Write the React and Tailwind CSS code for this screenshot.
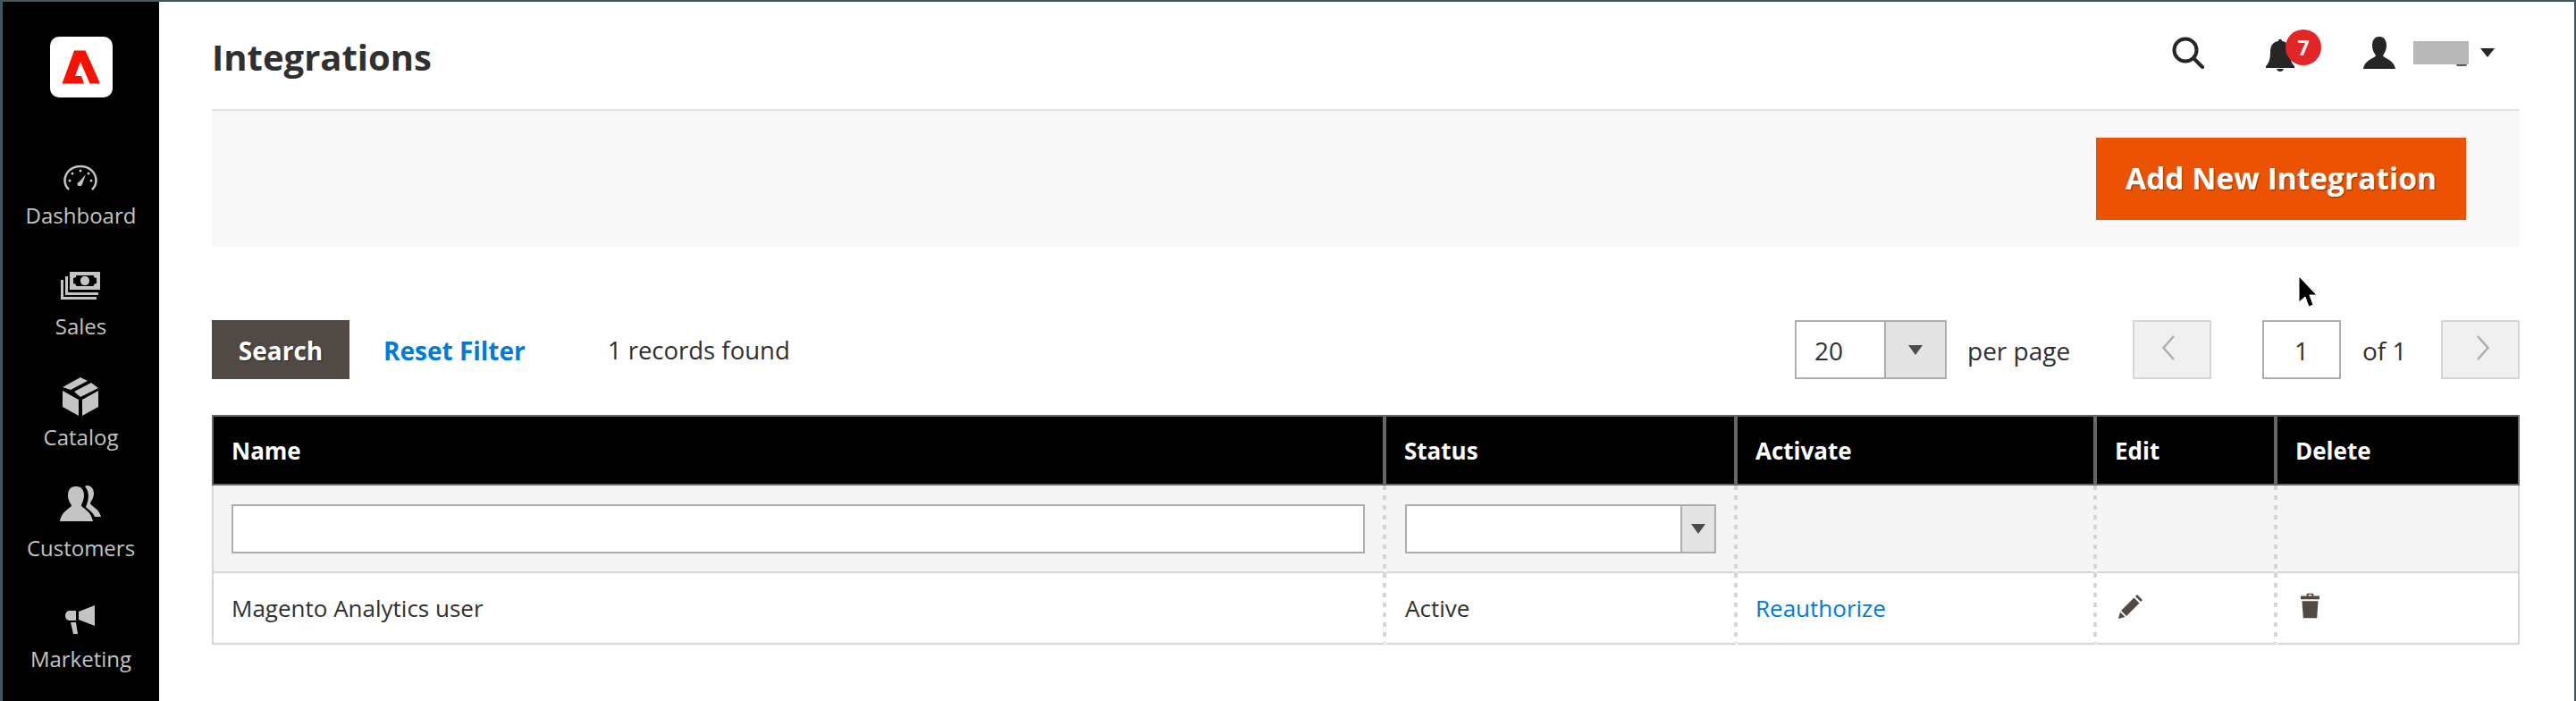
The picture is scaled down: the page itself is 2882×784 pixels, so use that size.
import React from "react";

const font = "font-['Open_Sans','Noto_Sans',sans-serif]";

function Gauge() {
  return (
    <svg width="38" height="29" viewBox="0 0 38 29" fill="none">
      <path d="M6 28C3 25 1.500 21.500 1.500 18C1.500 9 9 2 19 2C29 2 36.500 9 36.500 18C36.500 21.500 35 25 32 28" stroke="#c4c4c4" strokeWidth="2.500" />
      <circle cx="19" cy="7" r="1.500" fill="#c4c4c4" />
      <circle cx="10" cy="10" r="1.500" fill="#c4c4c4" />
      <circle cx="28" cy="10" r="1.500" fill="#c4c4c4" />
      <circle cx="7" cy="18" r="1.500" fill="#c4c4c4" />
      <circle cx="31" cy="18" r="1.500" fill="#c4c4c4" />
      <path d="M25 11L21 22C20 25 16 25 15.500 22C15.500 20 17 19.500 18 19Z" fill="#c4c4c4" />
    </svg>
  );
}

function Money() {
  return (
    <svg width="44" height="31" viewBox="0 0 44 31" fill="#c4c4c4">
      <path fillRule="evenodd" d="M10 0H44V20H10ZM14 7V13C16 13 17 14 17.500 16H36.500C37 14 38 13 40 13V7C38 7 37 6 36.500 4H17.500C17 6 16 7 14 7ZM27 5C30 5 32 7 32 10C32 13 30 15 27 15C24 15 22 13 22 10C22 7 24 5 27 5Z" />
      <path d="M5 5H8V23H42V26H5Z" />
      <path d="M0 9H3V28H40V31H0Z" />
    </svg>
  );
}

function Box() {
  return (
    <svg width="40" height="43" viewBox="0 0 40 43" fill="#c4c4c4">
      <path d="M20 0L28 4L9 14L0 11Z" />
      <path d="M32 6L40 12L20 22L13 16Z" />
      <path d="M0 15L18 25V43L0 33Z" />
      <path d="M40 15L22 25V43L40 33Z" />
    </svg>
  );
}

function People() {
  return (
    <svg width="46" height="40" viewBox="0 0 46 40" fill="#c4c4c4">
      <path d="M28 1C30 -1 37 0 38 8C38 14 35 17 34 20C36 24 44 26 46 35H39C37 30 32 27 29 24C32 17 34 8 28 1Z" />
      <path d="M18 1C25 1 27 6 27 11C27 16 25 19 24 22C24 25 35 28 37 40H0C2 28 13 25 13 22C11 19 9 16 9 11C9 6 11 1 18 1Z" />
    </svg>
  );
}

function Megaphone() {
  return (
    <svg width="34" height="32" viewBox="0 0 34 32" fill="#c4c4c4">
      <path d="M15 7L33 0V23L15 16Z" />
      <path d="M12 6V17H5C2 17 0 14.500 0 11.500C0 8.500 2 6 5 6Z" />
      <path d="M6 19H12L14 32H9Z" />
    </svg>
  );
}

const navItems = [
  { label: "Dashboard", icon: <Gauge />, pad: "pb-[4px]" },
  { label: "Sales", icon: <Money />, pad: "pb-[6px]" },
  { label: "Catalog", icon: <Box />, pad: "pb-0" },
  { label: "Customers", icon: <People />, pad: "pb-[6px]" },
  { label: "Marketing", icon: <Megaphone />, pad: "pb-[4px]" },
];

function Sidebar() {
  return (
    <aside className="w-[175px] shrink-0 bg-black flex flex-col items-center overflow-hidden">
      <div className="mt-[39px] shrink-0 w-[70px] h-[68px] bg-white rounded-[10px] flex items-center justify-center">
        <svg width="44" height="38" viewBox="0 0 44 38" fill="#fa0f00">
          <path d="M14 0.500H26.500L42 35V37.500H31.500L21 13L15 29H22L25 37.500H0.500Z" />
        </svg>
      </div>
      <nav className="mt-[60px] shrink-0 flex flex-col">
        {navItems.map((item) => (
          <div key={item.label} className="h-[124px] flex flex-col items-center">
            <div className={`h-[48px] flex items-end justify-center ${item.pad}`}>{item.icon}</div>
            <span className="mt-[7px] text-[24px] leading-[33px] text-[#c4c4c4]">{item.label}</span>
          </div>
        ))}
      </nav>
    </aside>
  );
}

function TopBar() {
  return (
    <header className="h-[122px] flex items-center justify-between border-b-2 border-[#e3e3e3]">
      <h1 className="text-[40px] font-bold text-[#303030] mt-[3px]">Integrations</h1>
      <div className="flex items-center -mt-[6px] text-[#262626]">
        <svg width="36" height="36" viewBox="0 0 36 36" fill="none" stroke="currentColor" strokeWidth="4" strokeLinecap="round">
          <circle cx="15" cy="15" r="12.500" />
          <path d="M24 24L34 34" />
        </svg>
        <div className="relative ml-[69px] w-[32px] h-[38px] mt-[6px]">
          <svg width="32" height="38" viewBox="0 0 32 38" fill="currentColor">
            <path d="M14 3C14 0 18 0 18 3C25 4 27 9 27 15C27 22 28 27 32 31V33H0V31C4 27 5 22 5 15C5 9 7 4 14 3Z" />
            <path d="M12 34H20C19 38 13 38 12 34Z" />
          </svg>
          <span className="absolute left-[22px] -top-[10px] w-[40px] h-[40px] rounded-full bg-[#e22626] text-white text-[23px] font-bold flex items-center justify-center">7</span>
        </div>
        <svg className="ml-[77px]" width="36" height="36" viewBox="0 0 36 36" fill="currentColor">
          <path d="M18 0C24 0 26 5 26 10C26 15 24 18 22 21C22 24 34 25 36 36H0C2 25 14 24 14 21C12 18 10 15 10 10C10 5 12 0 18 0Z" />
        </svg>
        <div className="relative ml-[20px] w-[62px] h-[26px] bg-[#b8b8b8]">
          <span className="absolute right-[2px] -bottom-[2px] w-[12px] h-[2px] bg-[#555] rounded-b-full" />
        </div>
        <span className="ml-[13px] w-0 h-0 border-x-[8px] border-x-transparent border-t-[10px] border-t-[#262626]" />
        <span className="w-[28px]" />
      </div>
    </header>
  );
}

function ArrowBox({ w }) {
  return (
    <span className={`${w} h-full shrink-0 bg-[#e3e3e3] border-l-2 border-[#adadad] flex items-center justify-center`}>
      <span className="w-0 h-0 border-x-[8px] border-x-transparent border-t-[11px] border-t-[#514943]" />
    </span>
  );
}

function Pager() {
  return (
    <div className="flex items-center text-[28px] text-[#303030]">
      <div className="w-[170px] h-[66px] flex border-2 border-[#adadad] bg-white">
        <span className="flex-1 pl-[20px] leading-[64px]">20</span>
        <ArrowBox w="w-[68px]" />
      </div>
      <span className="ml-[23px] w-[185px] pt-[2px]">per page</span>
      <button className="w-[88px] h-[66px] bg-[#f0f0f0] border-2 border-[#d6d6d6] flex items-center justify-center pb-[4px] pr-[8px]">
        <svg width="16" height="28" viewBox="0 0 16 28" fill="none" stroke="#adadad" strokeWidth="2.500">
          <path d="M14 1L2.500 14L14 27" />
        </svg>
      </button>
      <div className="ml-[57px] w-[88px] h-[66px] border-2 border-[#adadad] bg-white text-center leading-[64px]">1</div>
      <span className="ml-[24px] w-[88px] pt-[2px]">of 1</span>
      <button className="w-[88px] h-[66px] bg-[#f0f0f0] border-2 border-[#d6d6d6] flex items-center justify-center pb-[4px] pl-[6px]">
        <svg width="16" height="28" viewBox="0 0 16 28" fill="none" stroke="#adadad" strokeWidth="2.500">
          <path d="M2 1L13.500 14L2 27" />
        </svg>
      </button>
    </div>
  );
}

const columns = [
  { name: "Name", w: "w-[1314px] border-l-2" },
  { name: "Status", w: "w-[393px]" },
  { name: "Activate", w: "w-[402px]" },
  { name: "Edit", w: "w-[202px]" },
  { name: "Delete", w: "" },
];

// short grey dashes down the right edge of a cell
const dashed =
  "border-r-4 border-r-transparent bg-origin-border bg-[linear-gradient(#d6d6d6_50%,transparent_50%)] bg-[length:4px_11px] bg-repeat-y bg-[position:100%_0]";
const cell = "border-b-2 border-b-[#d6d6d6]";

function Grid() {
  return (
    <table className="w-[2582px] mt-[40px] table-fixed border-separate border-spacing-0 text-[26px] text-[#303030]">
      <thead>
        <tr className="bg-black text-white">
          {columns.map((c, i) => (
            <th
              key={c.name}
              className={`${c.w} h-[79px] border-y-2 ${i === 4 ? "border-r-2" : "border-r-4"} border-[#666] pl-[20px] pt-[1px] text-left font-bold`}
            >
              {c.name}
            </th>
          ))}
        </tr>
      </thead>
      <tbody>
        <tr className="bg-[#f5f5f5]">
          <td className={`${cell} ${dashed} h-[98px] border-l-2 border-l-[#d6d6d6] pl-[20px] pr-[20px]`}>
            <div className="h-[55px] bg-white border-2 border-[#adadad]" />
          </td>
          <td className={`${cell} ${dashed} pl-[21px] pr-[20px]`}>
            <div className="h-[55px] bg-white border-2 border-[#adadad] flex justify-end">
              <ArrowBox w="w-[38px]" />
            </div>
          </td>
          <td className={`${cell} ${dashed}`} />
          <td className={`${cell} ${dashed}`} />
          <td className={`${cell} border-r-2 border-r-[#d6d6d6]`} />
        </tr>
        <tr>
          <td className={`${cell} ${dashed} h-[80px] border-l-2 border-l-[#d6d6d6] pl-[20px] pt-[1px]`}>Magento Analytics user</td>
          <td className={`${cell} ${dashed} pl-[21px] pt-[1px]`}>Active</td>
          <td className={`${cell} ${dashed} pl-[20px] pt-[1px] text-[#007bdb]`}>Reauthorize</td>
          <td className={`${cell} ${dashed} pl-[24px]`}>
            <svg className="-mt-[4px]" width="28" height="28" viewBox="0 0 28 28" fill="#514943">
              <path d="M21 1L27 7L25 9L19 3Z" />
              <path d="M17.500 4.500L23.500 10.500L9 25L3 19Z" />
              <path d="M2 20.500L7.500 26L0 28Z" />
            </svg>
          </td>
          <td className={`${cell} border-r-2 border-r-[#d6d6d6] pl-[26px]`}>
            <svg className="-mt-[4px]" width="21" height="30" viewBox="0 0 22 30" fill="#514943">
              <path fillRule="evenodd" d="M7 0H15V3H22V7H0V3H7ZM9 1.500V3H13V1.500Z" />
              <path d="M1.500 9H20.500L19 29H3Z" />
            </svg>
          </td>
        </tr>
      </tbody>
    </table>
  );
}

export default function App() {
  return (
    <div className={`relative w-[2882px] h-[784px] overflow-hidden flex bg-white border-t-2 border-l-[3px] border-r-2 border-[#43565f] ${font}`}>
      <Sidebar />
      <main className="flex-1 pl-[59px] pr-[61px]">
        <TopBar />
        <div className="h-[152px] bg-[#f8f8f8] flex items-center justify-end pr-[60px]">
          <button className="w-[414px] h-[92px] pb-[2px] bg-[#eb5202] text-white text-[33.500px] font-bold [text-shadow:1px_1px_1px_#8a3000]">
            Add New Integration
          </button>
        </div>
        <div className="mt-[82px] flex items-center justify-between">
          <div className="flex items-center text-[28px]">
            <button className="w-[154px] h-[66px] pt-[2px] bg-[#514943] text-white font-bold [text-shadow:1px_1px_1px_#222]">Search</button>
            <span className="ml-[38px] pt-[2px] font-bold text-[#007bdb]">Reset Filter</span>
            <span className="ml-[92px] pt-[2px] text-[27.500px] text-[#303030]">1 records found</span>
          </div>
          <Pager />
        </div>
        <Grid />
      </main>
      {/* mouse pointer */}
      <svg className="absolute left-[2568px] top-[306px]" width="24" height="36" viewBox="0 0 24 36" fill="#000">
        <path d="M1 1L21 22H13L17 33L12 35L8 24L1 30Z" stroke="#fff" strokeWidth="1" />
      </svg>
    </div>
  );
}
